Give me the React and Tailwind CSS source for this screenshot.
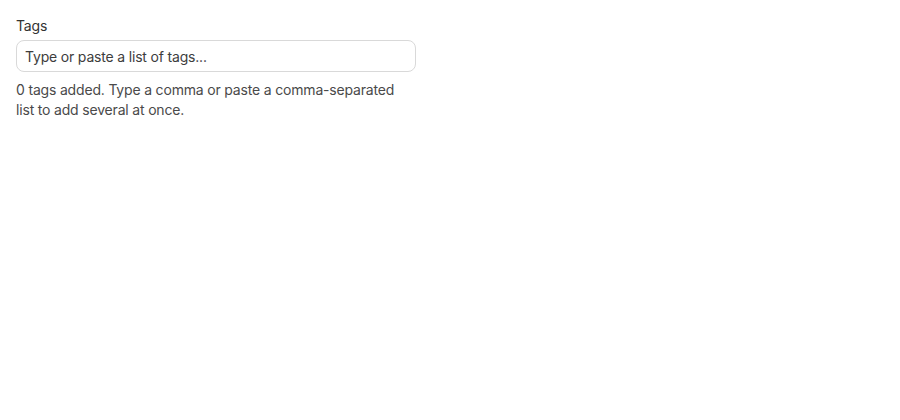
export default function App() {
  return (
    <div className="min-h-screen bg-white p-4 tracking-[-0.18px]" style={{ fontFamily: "Inter, 'Noto Sans', sans-serif" }}>
      <div className="flex w-[400px] flex-col">
        <label className="text-sm leading-5 text-[#333333]">Tags</label>
        <input
          type="text"
          placeholder="Type or paste a list of tags..."
          className="mt-1 h-8 w-full rounded-lg border border-[#d9d9d9] bg-white px-2 text-sm tracking-[-0.18px] text-[#333333] placeholder:text-[#3d3d3d] outline-none"
        />
        <p className="mt-2 max-w-[390px] text-sm leading-5 text-[#4a4a4a]">
          0 tags added. Type a comma or paste a comma-separated list to add several at once.
        </p>
      </div>
    </div>
  );
}
